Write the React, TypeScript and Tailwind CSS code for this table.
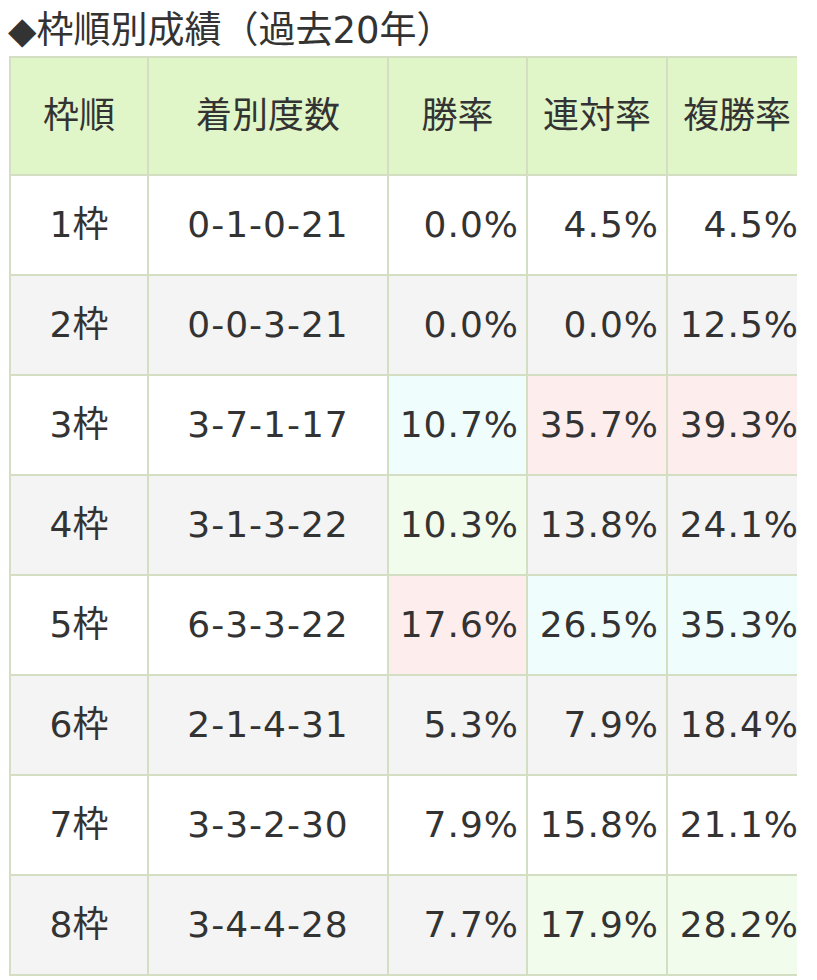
import React from "react";

type Tone = "w" | "g" | "c" | "p" | "l";

const bgClass: Record<Tone, string> = {
  w: "bg-white",
  g: "bg-[#f4f4f4]",
  c: "bg-[#effdfd]",
  p: "bg-[#fdeded]",
  l: "bg-[#f1fcec]",
};

const rows: { waku: string; rec: string; vals: string[]; tones: Tone[]; base: Tone }[] = [
  { waku: "1枠", rec: "0-1-0-21", vals: ["0.0%", "4.5%", "4.5%"], tones: ["w", "w", "w"], base: "w" },
  { waku: "2枠", rec: "0-0-3-21", vals: ["0.0%", "0.0%", "12.5%"], tones: ["g", "g", "g"], base: "g" },
  { waku: "3枠", rec: "3-7-1-17", vals: ["10.7%", "35.7%", "39.3%"], tones: ["c", "p", "p"], base: "w" },
  { waku: "4枠", rec: "3-1-3-22", vals: ["10.3%", "13.8%", "24.1%"], tones: ["l", "g", "g"], base: "g" },
  { waku: "5枠", rec: "6-3-3-22", vals: ["17.6%", "26.5%", "35.3%"], tones: ["p", "c", "c"], base: "w" },
  { waku: "6枠", rec: "2-1-4-31", vals: ["5.3%", "7.9%", "18.4%"], tones: ["g", "g", "g"], base: "g" },
  { waku: "7枠", rec: "3-3-2-30", vals: ["7.9%", "15.8%", "21.1%"], tones: ["w", "w", "w"], base: "w" },
  { waku: "8枠", rec: "3-4-4-28", vals: ["7.7%", "17.9%", "28.2%"], tones: ["g", "l", "l"], base: "g" },
];

const font = { fontFamily: '"DejaVu Sans", "Noto Sans CJK JP", sans-serif' };

export default function App() {
  return (
    <div className="bg-white w-[817px] h-[980px] overflow-hidden text-[#333333]" style={font}>
      <div className="h-[56px] flex items-center pl-[8px] pt-[4px] text-[37px] leading-none">
        ◆枠順別成績（過去20年）
      </div>
      <div className="ml-[9px] w-[788px] overflow-hidden">
        <div className="grid grid-cols-[138px_240px_139px_140px_140px] w-[797px] border-l-2 border-t-2 border-[#d4dec3] text-[36px]">
          {["枠順", "着別度数", "勝率", "連対率", "複勝率"].map((h) => (
            <div
              key={h}
              className="h-[118px] flex items-center justify-center bg-[#e0f5c8] border-r-2 border-b-2 border-[#d4dec3]"
            >
              {h}
            </div>
          ))}
          {rows.map((r) => (
            <React.Fragment key={r.waku}>
              <div className={`h-[100px] flex items-center justify-center border-r-2 border-b-2 border-[#d4dec3] ${bgClass[r.base]}`}>
                {r.waku}
              </div>
              <div className={`h-[100px] flex items-center justify-center tracking-[1px] border-r-2 border-b-2 border-[#d4dec3] ${bgClass[r.base]}`}>
                {r.rec}
              </div>
              {r.vals.map((v, i) => (
                <div
                  key={i}
                  className={`h-[100px] flex items-center justify-end pr-[7px] tracking-[1px] border-r-2 border-b-2 border-[#d4dec3] ${bgClass[r.tones[i]]}`}
                >
                  {v}
                </div>
              ))}
            </React.Fragment>
          ))}
        </div>
      </div>
    </div>
  );
}
